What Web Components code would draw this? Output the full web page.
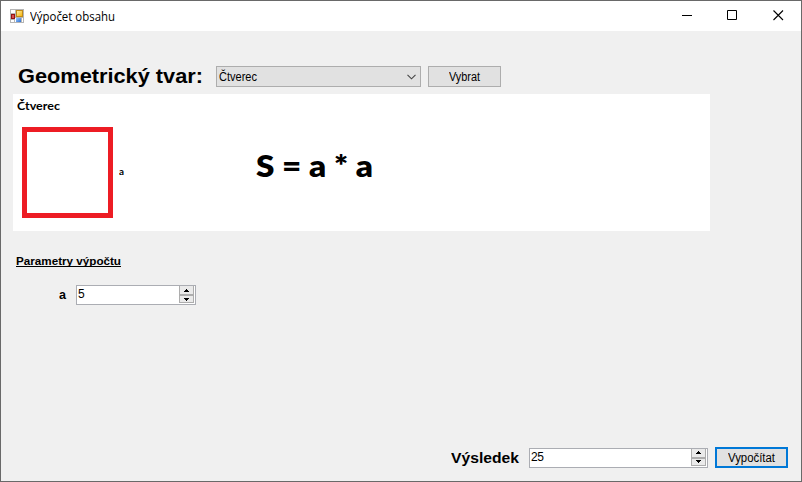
<!DOCTYPE html>
<html lang="cs"><head><meta charset="utf-8"><title>Výpočet obsahu</title>
<style>html,body{margin:0;width:802px;height:482px;overflow:hidden}</style></head>
<body><area-app></area-app>
<script>
const define=(name,html,init)=>customElements.define(name,class extends HTMLElement{
  constructor(){super();this.attachShadow({mode:'open'})}
  connectedCallback(){if(this.shadowRoot.childNodes.length)return;this.shadowRoot.innerHTML=html;if(init)init(this,this.shadowRoot)}
});
// Label whose glyphs are condensed or widened to span the width given in "fit".
define('fit-label',`<style>:host{display:block;white-space:nowrap;line-height:1;flex:none}span{display:inline-block;transform-origin:0 50%}:host([underlined]) span{text-decoration:underline;text-underline-offset:1px;text-decoration-thickness:1px;text-decoration-skip-ink:none}</style><span><slot></slot></span>`,(el,r)=>{
  const s=r.querySelector('span'),fit=+el.getAttribute('fit');
  if(fit){const w=s.getBoundingClientRect().width;s.style.transform='scaleX('+fit/w+')';el.style.width=fit+'px'}
});
define('title-bar',`<style>
:host{display:flex;height:30px;background:#fff;align-items:center;color:#000}
.ico{margin:0 6px 0 9px;flex:none}.t{margin-right:auto;font:12px "Open Sans","Noto Sans",sans-serif}
.b{width:46px;height:30px;flex:none}
</style>
<svg class="ico" width="14" height="14" shape-rendering="crispEdges"><defs>
<linearGradient id="y" x2="1" y2="1"><stop stop-color="#fff3b0"/><stop offset="1" stop-color="#f5b000"/></linearGradient>
<linearGradient id="u" x2="1" y2="1"><stop stop-color="#9cc8ff"/><stop offset="1" stop-color="#2c6fd2"/></linearGradient></defs>
<rect width="14" height="14" fill="#b5b5b5"/><path d="M1 1h4v3H1zM1 11h3v2H1zM12 9h1v4h-1z" fill="#fff"/>
<rect x="6.500" y="1.500" width="6" height="6" fill="url(#y)" stroke="#c08a18"/>
<rect x="1.500" y="5.500" width="3" height="4" fill="#d85050" stroke="#961414"/>
<rect x="6" y="9" width="5" height="4" fill="url(#u)"/><path d="M5.500 9v4" stroke="#fff"/></svg>
<fit-label class="t" fit="85">Výpočet obsahu</fit-label>
<svg class="b" viewBox="0 0 46 30"><path d="M19 14.500h10" stroke="#000"/></svg>
<svg class="b" viewBox="0 0 46 30"><path d="M18.500 9.500h9v9h-9z" fill="none" stroke="#000"/></svg>
<svg class="b" viewBox="0 0 46 30"><path d="M18.500 9.500l9.500 9.500M28 9.500L18.500 19" fill="none" stroke="#000" stroke-width="1.100"/></svg>`);
define('combo-box',`<style>:host{display:flex;box-sizing:border-box;width:205px;height:21px;border:1px solid #adadad;background:#e1e1e1;align-items:center;padding:0 4px 0 2px;justify-content:space-between;font:12px "Liberation Sans",sans-serif}</style>
<svg width="9" height="6"><path d="M.5 .8l4 4 4-4" fill="none" stroke="#444" stroke-width="1.100"/></svg>`,(el,r)=>{
  const l=document.createElement('fit-label');l.setAttribute('fit','38');l.textContent=el.textContent;r.insertBefore(l,r.querySelector('svg'))});
define('push-button',`<style>:host{display:flex;box-sizing:border-box;width:73px;height:21px;border:1px solid #adadad;background:#e1e1e1;align-items:center;justify-content:center;font:12px "Liberation Sans",sans-serif;padding-top:1px}:host([primary]){border:2px solid #0078d7}</style><slot></slot>`);
define('number-box',`<style>:host{display:flex;box-sizing:border-box;height:20px;border:1px solid #abadb3;background:#fff;justify-content:space-between;padding:0 1px 1px 1px;font:12px "Liberation Sans",sans-serif}
.v{padding-top:2px;line-height:13px;letter-spacing:-.5px}.s{display:flex;flex-direction:column;width:15px;height:17px;box-sizing:border-box}
i{display:flex;align-items:center;justify-content:center;box-sizing:border-box;border:1px solid #adadad;background:#eaeaea;width:15px}
i:first-child{height:9px;border-top:0}i:last-child{height:8px}</style>
<span class="v"><slot></slot></span><span class="s"><i><svg width="5" height="3" shape-rendering="crispEdges"><path d="M2 0h1v1h1v1h1v1H0V2h1V1h1z"/></svg></i><i><svg width="5" height="3" shape-rendering="crispEdges"><path d="M0 0h5v1H4v1H3v1H2V2H1V1H0z"/></svg></i></span>`);
define('shape-preview',`<style>
:host{display:block;box-sizing:border-box;width:697px;height:137px;background:#fff;padding:6px 4px;font-family:Lato,"Open Sans",sans-serif;font-weight:700}
.n{font-size:12px;height:12px}.row{display:flex;align-items:center;height:91px;margin:15px 0 0 5px}
.sq{box-sizing:border-box;width:91px;height:91px;border:5px solid #ed1c24;flex:none}
.a{font-size:9px;margin:-3px 132px 0 6px}.f{font-size:31px;font-weight:800;margin-top:-15px}
</style><fit-label class="n" fit="43">Čtverec</fit-label><div class="row"><div class="sq"></div><fit-label class="a" fit="5">a</fit-label><fit-label class="f" fit="117">S = a * a</fit-label></div>`);
define('area-app',`<style>
:host{display:flex;flex-direction:column;box-sizing:border-box;width:802px;height:482px;border:1px solid #696969;background:#f0f0f0;color:#000;font-family:"Liberation Sans",sans-serif}
main{display:flex;flex-direction:column;flex:1;padding:35px 13px 13px 12px}
.top{display:flex;height:21px;align-items:center;padding-left:5px}
.h{font-size:21px;font-weight:700;margin:-2px 13px 0 0}push-button{margin-left:7px}
shape-preview{margin-top:7px}
.p{font-size:11.500px;height:12px;font-weight:700;margin:25px 0 0 3px}
.prm{display:flex;align-items:center;margin:17px 0 0 46px;height:20px}.prm fit-label{font-size:12px;font-weight:700;margin:-1px 10px 0 0}.prm number-box{width:120px}
.res{display:flex;align-items:center;margin-top:auto;justify-content:flex-end;height:21px}
.r{font-size:15px;font-weight:700;margin-right:10px}.res number-box{width:179px}
</style><title-bar></title-bar><main>
<div class="top"><fit-label class="h" fit="185">Geometrický tvar:</fit-label><combo-box>Čtverec</combo-box><push-button><fit-label fit="31">Vybrat</fit-label></push-button></div>
<shape-preview></shape-preview>
<fit-label class="p" fit="105" underlined>Parametry výpočtu</fit-label>
<div class="prm"><fit-label fit="7">a</fit-label><number-box>5</number-box></div>
<div class="res"><fit-label class="r" fit="68">Výsledek</fit-label><number-box>25</number-box><push-button primary><fit-label fit="47">Vypočítat</fit-label></push-button></div>
</main>`);
</script></body></html>
